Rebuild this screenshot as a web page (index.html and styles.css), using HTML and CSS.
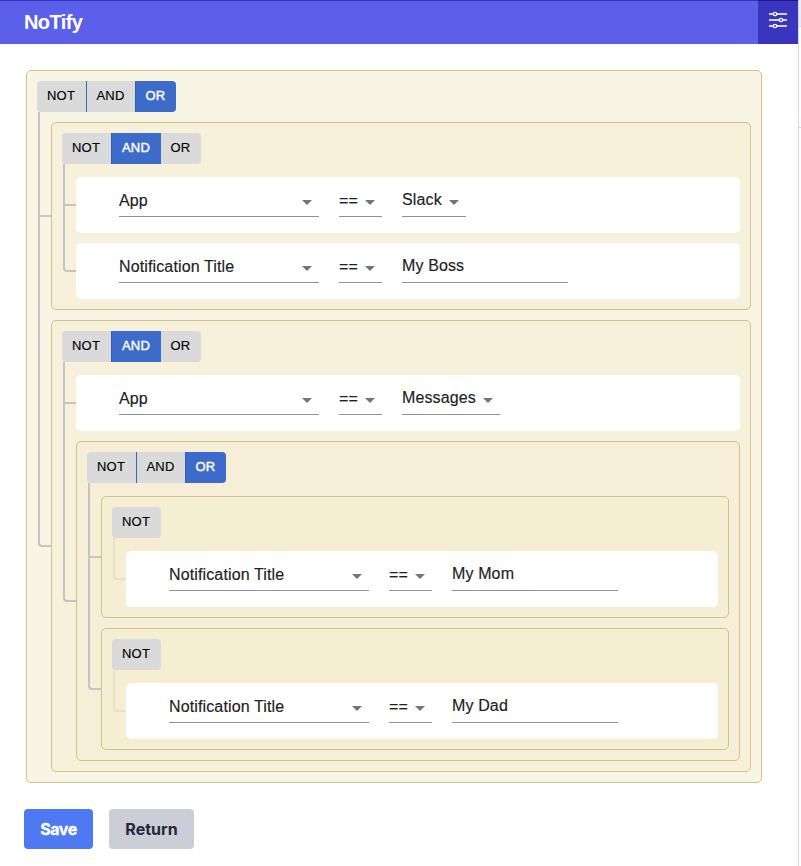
FILE: index.html
```html
<!DOCTYPE html>
<html lang="en">
<head>
<meta charset="utf-8">
<title>NoTify</title>
<link rel="stylesheet" href="styles.css">
</head>
<body>
<div class="page">
<main class="panel">
  <header class="topbar">
    <h1>NoTify</h1>
    <button class="settings" aria-label="Settings">
      <svg width="20" height="18" viewBox="0 0 20 18" fill="none" stroke="#d3d2f5" stroke-width="2">
        <path d="M1 3h4M9 3h10M1 9h10M15 9h4M1 15h4M9 15h10"/>
        <g stroke="#fff" stroke-width="1.300"><circle cx="7" cy="3" r="1.700"/><circle cx="13" cy="9" r="1.700"/><circle cx="7" cy="15" r="1.700"/></g>
      </svg>
    </button>
  </header>

  <section class="group root">
    <div class="conj"><button>NOT</button><button class="sep">AND</button><button class="on">OR</button></div>
    <div class="children">
      <div class="node">
        <div class="group l2">
          <div class="conj"><button>NOT</button><button class="on mid">AND</button><button>OR</button></div>
          <div class="children">
            <div class="node"><div class="rule"><span class="field select">App</span><span class="op select">==</span><span class="value select slack">Slack</span></div></div>
            <div class="node"><div class="rule"><span class="field select">Notification Title</span><span class="op select">==</span><span class="value text">My Boss</span></div></div>
          </div>
        </div>
      </div>
      <div class="node">
        <div class="group l2">
          <div class="conj"><button>NOT</button><button class="on mid">AND</button><button>OR</button></div>
          <div class="children">
            <div class="node"><div class="rule"><span class="field select">App</span><span class="op select">==</span><span class="value select messages">Messages</span></div></div>
            <div class="node">
              <div class="group l3">
                <div class="conj"><button>NOT</button><button class="sep">AND</button><button class="on">OR</button></div>
                <div class="children">
                  <div class="node">
                    <div class="group l4">
                      <div class="conj"><button>NOT</button></div>
                      <div class="children faint">
                        <div class="node"><div class="rule"><span class="field select">Notification Title</span><span class="op select">==</span><span class="value text">My Mom</span></div></div>
                      </div>
                    </div>
                  </div>
                  <div class="node">
                    <div class="group l4">
                      <div class="conj"><button>NOT</button></div>
                      <div class="children faint">
                        <div class="node"><div class="rule"><span class="field select">Notification Title</span><span class="op select">==</span><span class="value text">My Dad</span></div></div>
                      </div>
                    </div>
                  </div>
                </div>
              </div>
            </div>
          </div>
        </div>
      </div>
    </div>
  </section>

  <div class="actions"><button class="save">Save</button><button class="return">Return</button></div>
</main>
<aside class="edge"><div class="edge-head"></div><div class="edge-row"></div></aside>
</div>
</body>
</html>
```
FILE: styles.css
```css
*, *::before, *::after { box-sizing: border-box; }
body { margin: 0; background: #fff; font-family: "Liberation Sans", Arial, sans-serif; overflow: hidden; }
button { border: 0; margin: 0; padding: 0; font: inherit; color: inherit; }
.page { display: flex; height: 866px; }
.panel { width: 798px; }

.topbar { height: 44px; display: flex; align-items: stretch; justify-content: space-between; background: #5b5fea; box-shadow: inset 0 1px #3433bd; color: #fff; padding-left: 24px; }
.topbar h1 { margin: 0; font-size: 20px; line-height: 44px; font-weight: 700; letter-spacing: -0.6px; }
.settings { width: 40px; background: #3935be; box-shadow: inset 0 1px #1c1695; display: flex; justify-content: center; padding-top: 11px; }

.group { border: 1px solid #d1c18b; border-radius: 5px; padding: 10px; }
.root { width: 736px; margin: 26px 0 0 26px; background: #f9f5e5; }
.l2 { background: #f7f0da; }
.l3 { background: #f6eed6; }
.l4 { background: #f6eed3; }

.conj { display: inline-flex; height: 31px; border-radius: 4px; overflow: hidden; vertical-align: top; background: #dadada; font-size: 13px; letter-spacing: 0.25px; color: #000; -webkit-text-stroke: 0.15px #000; }
.conj button { width: 49px; background: none; line-height: 29px; padding: 0 1px 2px 0; letter-spacing: inherit; }
.conj button:last-child:not(:first-child) { width: 40px; }
.conj .sep { border-left: 1px solid #3565c9; }
.conj .on { background: #3d6bca; color: #fff; border-left: 1px solid #315dbb; -webkit-text-stroke: 0.4px #fff; }
.conj .on:last-child:not(:first-child) { width: 41px; }
.conj .mid { width: 50px; }

.children { display: flex; flex-direction: column; gap: 10px; padding: 13px 0 0 14px; --line: #c4c4c4; }
.root > .children { padding-top: 10px; }
.faint { --line: #e9e2c6; }
.node { position: relative; }
.node::before { content: ""; position: absolute; left: -13px; top: -10px; width: 13px; height: calc(50% + 11px); border: solid var(--line); border-width: 0 0 2px 2px; }
.node:first-child::before { top: -13px; height: calc(50% + 14px); }
.root > .children > .node:first-child::before { top: -10px; height: calc(50% + 11px); }
.node:last-child::before { border-bottom-left-radius: 4px; }
.node:not(:last-child)::after { content: ""; position: absolute; left: -13px; top: 50%; width: 2px; height: 50%; background: var(--line); }

.rule { height: 56px; display: flex; gap: 20px; padding-left: 43px; background: #fff; border-radius: 5px; font-size: 16px; letter-spacing: 0.13px; color: #212121; -webkit-text-stroke: 0.15px #212121; }
.rule span { height: 40px; border-bottom: 1px solid #929292; line-height: 19px; padding-top: 14px; white-space: nowrap; }
.rule .value { padding-top: 13px; }
.field { width: 200px; }
.op { width: 43px; }
.text { width: 166px; }
.slack { width: 64px; }
.messages { width: 98px; }
.select { display: flex; justify-content: space-between; padding-right: 7px; }
.select::after { content: ""; width: 10px; height: 5px; margin-top: 9px; background: #757575; clip-path: polygon(0 0, 100% 0, 50% 100%); }
.value.select::after { margin-top: 10px; }

.actions { display: flex; gap: 16px; margin: 26px 0 0 24px; font-family: Inter, sans-serif; font-weight: 700; font-size: 16px; }
.actions button { height: 40px; border-radius: 4px; }
.save { width: 69px; background: #4e79f3; color: #fff; letter-spacing: -0.4px; -webkit-text-stroke: 0.3px #fff; }
.return { width: 85px; background: #cbced7; color: #25273a; }

.edge { width: 3px; border-left: 1px solid #cdd8fa; }
.edge-head { height: 27px; background: #e9edfc; border-bottom: 1px solid #cdd8fa; }
.edge-row { height: 101px; border-bottom: 1px solid #cdd8fa; }
```
